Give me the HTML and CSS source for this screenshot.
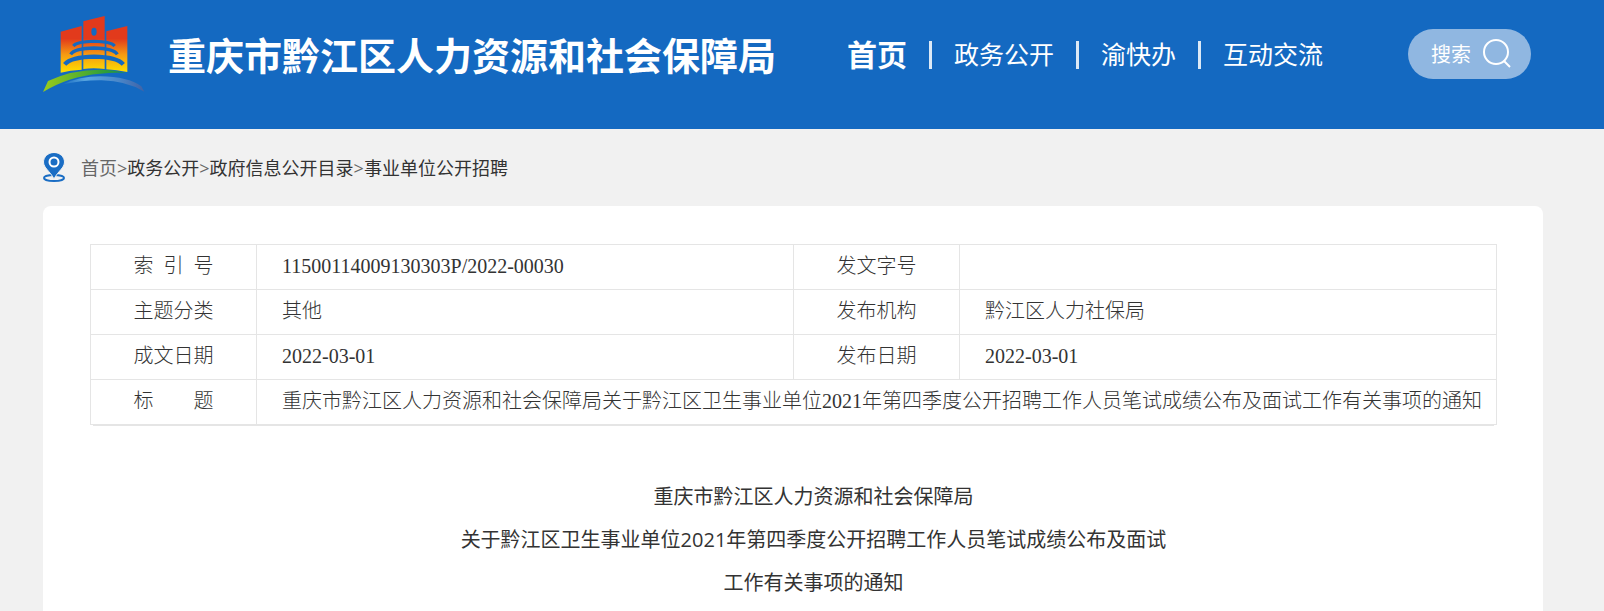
FILE: index.html
```
<!DOCTYPE html>
<html lang="zh-CN">
<head>
    <meta charset="UTF-8">
    <meta name="viewport" content="width=device-width, initial-scale=1.0">
    <title>重庆市黔江区人力资源和社会保障局</title>
    <link rel="stylesheet" href="styles.css">
</head>
<body>
    <header class="header">
        <a class="brand" href="#">
            <svg class="logo" viewBox="39 45 306 234" aria-hidden="true">
                <defs>
                    <linearGradient id="tower" x1="0" y1="48" x2="0" y2="218" gradientUnits="userSpaceOnUse">
                        <stop offset="0.4" stop-color="#e23a1c"/>
                        <stop offset="0.68" stop-color="#f59a12"/>
                        <stop offset="1" stop-color="#ffe000"/>
                    </linearGradient>
                    <linearGradient id="hill">
                        <stop offset="0" stop-color="#9acb1c"/>
                        <stop offset="0.75" stop-color="#2e9e3a"/>
                        <stop offset="1" stop-color="#1d8a5c"/>
                    </linearGradient>
                    <linearGradient id="river">
                        <stop offset="0" stop-color="#1469c1"/>
                        <stop offset="0.3" stop-color="#5aa7e0"/>
                        <stop offset="0.7" stop-color="#4a86c8"/>
                        <stop offset="1" stop-color="#3f62a6"/>
                    </linearGradient>
                </defs>
                <g fill="url(#tower)">
                    <path d="M92 95 L155 78 V209 Q120 211 92 218 Z"/>
                    <path d="M160 64 L224 48 V207 Q190 203 160 207 Z"/>
                    <path d="M229 94 L292 78 V216 Q260 210 229 208 Z"/>
                </g>
                <g fill="none" stroke="#1469c1">
                    <path stroke-width="9" d="M130 138 Q140 125 192 124 Q244 125 254 138"/>
                    <path stroke-width="10" d="M122 163 Q134 145 192 144 Q250 145 262 163"/>
                    <path stroke-width="13" d="M104 193 Q124 171 192 170 Q260 171 280 193"/>
                </g>
                <ellipse cx="192" cy="95" rx="8" ry="12" fill="#1469c1"/>
                <path fill="url(#hill)" d="M39 276 L54 243 Q125 209 210 209 Q252 209 290 219 Q250 217 210 221 Q115 229 39 276 Z"/>
                <path fill="url(#river)" d="M94 254 Q150 229 210 229 Q295 230 334 259 L343 275 Q290 243 215 241 Q160 240 94 254 Z"/>
            </svg>
            <span class="site-name">重庆市黔江区人力资源和社会保障局</span>
        </a>
        <nav class="nav">
            <a class="active" href="#">首页</a>
            <a href="#">政务公开</a>
            <a href="#">渝快办</a>
            <a href="#">互动交流</a>
        </nav>
        <button class="search" type="button">
            <span>搜索</span>
            <svg class="search-icon" viewBox="0 0 30 30" aria-hidden="true">
                <circle cx="13" cy="14" r="12"/>
                <path d="M21 23 L27 29"/>
            </svg>
        </button>
    </header>

    <main class="main">
        <div class="breadcrumb">
            <svg class="pin" viewBox="0 0 22 29" aria-hidden="true">
                <ellipse cx="11" cy="25" rx="10" ry="3" fill="none" stroke="#1a6dc4" stroke-width="2"/>
                <path fill="#1a6dc4" stroke="#f1f1f1" d="M11 -0.5 C5 -0.5 0.5 4 0.5 9 C0.5 15 7 18 11 26 C15 18 21.5 15 21.5 9 C21.5 4 17 -0.5 11 -0.5 Z"/>
                <circle cx="11" cy="9" r="4.5" fill="#1a6dc4" stroke="#fff" stroke-width="2"/>
            </svg>
            <div class="path">
                <a class="home" href="#">首页</a>&gt;<a href="#">政务公开</a>&gt;<a href="#">政府信息公开目录</a>&gt;<a href="#">事业单位公开招聘</a>
            </div>
        </div>

        <article class="card">
            <table class="info">
                <colgroup>
                    <col class="col-label">
                    <col>
                    <col class="col-label">
                    <col>
                </colgroup>
                <tr>
                    <th scope="row">索&ensp;引&ensp;号</th>
                    <td>11500114009130303P/2022-00030</td>
                    <th scope="row">发文字号</th>
                    <td></td>
                </tr>
                <tr>
                    <th scope="row">主题分类</th>
                    <td>其他</td>
                    <th scope="row">发布机构</th>
                    <td>黔江区人力社保局</td>
                </tr>
                <tr>
                    <th scope="row">成文日期</th>
                    <td>2022-03-01</td>
                    <th scope="row">发布日期</th>
                    <td>2022-03-01</td>
                </tr>
                <tr>
                    <th scope="row">标&emsp;&emsp;题</th>
                    <td class="wide" colspan="3">重庆市黔江区人力资源和社会保障局关于黔江区卫生事业单位2021年第四季度公开招聘工作人员笔试成绩公布及面试工作有关事项的通知</td>
                </tr>
            </table>

            <div class="content">
                <p>重庆市黔江区人力资源和社会保障局</p>
                <p>关于黔江区卫生事业单位2021年第四季度公开招聘工作人员笔试成绩公布及面试</p>
                <p>工作有关事项的通知</p>
            </div>
        </article>
    </main>
</body>
</html>
```

FILE: styles.css
```
:root {
    --blue: #1469c1;
    --page: #f1f1f1;
    --line: #e5e5e5;
    --text: #333;
}

* {
    margin: 0;
    padding: 0;
    box-sizing: border-box;
}

body {
    display: flex;
    flex-direction: column;
    min-height: 100vh;
    font-family: "Open Sans", "Noto Sans CJK SC", sans-serif;
    color: var(--text);
    background: var(--page);
}

a {
    color: inherit;
    text-decoration: none;
}

/* Header */
.header {
    display: flex;
    align-items: flex-start;
    height: 129px;
    padding: 15px 73px 0 43px;
    color: #fff;
    background: var(--blue);
    white-space: nowrap;
}

.brand {
    display: flex;
    align-items: center;
    gap: 23px;
}

.logo {
    width: 102px;
    height: 78px;
}

.site-name {
    padding-bottom: 2px;
    font-size: 38px;
    font-weight: bold;
}

.nav {
    display: flex;
    align-items: center;
    height: 78px;
    margin-left: 71px;
    padding-bottom: 2px;
    font-size: 25px;
}

.nav a {
    display: flex;
    align-items: center;
}

.nav a + a::before {
    content: "";
    width: 3px;
    height: 28px;
    margin: 4px 22px 0;
    background: #dce9f6;
}

.nav .active {
    font-size: 30px;
    font-weight: bold;
}

.search {
    display: flex;
    align-items: center;
    gap: 12px;
    height: 50px;
    margin: 14px 0 0 auto;
    padding: 0 18px 2px 23px;
    border: 0;
    border-radius: 25px;
    font: inherit;
    font-size: 20px;
    color: #fff;
    background: #90b7e1;
    cursor: pointer;
}

.search-icon {
    width: 30px;
    height: 30px;
    overflow: visible;
    fill: none;
    stroke: #fff;
    stroke-width: 2;
}

/* Breadcrumb */
.main {
    display: flex;
    flex: 1;
    flex-direction: column;
    padding: 0 61px 0 43px;
}

.breadcrumb {
    display: flex;
    align-items: center;
    gap: 16px;
    height: 77px;
}

.pin {
    width: 22px;
    height: 29px;
}

.path {
    padding-bottom: 2px;
    font-size: 18px;
    color: #666;
}

.path a {
    color: var(--text);
}

.path .home {
    color: #666;
}

/* Article */
.card {
    flex: 1;
    padding: 38px 46px 0 47px;
    border-radius: 8px 8px 0 0;
    background: #fff;
}

.info {
    width: 100%;
    table-layout: fixed;
    border-collapse: collapse;
    font-family: "Liberation Serif", "Noto Sans CJK SC", serif;
    font-size: 20px;
    line-height: 24px;
    box-shadow: 0 4px 0 -3px var(--line);
}

.col-label {
    width: 166px;
}

.info th,
.info td {
    height: 45px;
    padding-bottom: 2px;
    border: 1px solid var(--line);
    font-weight: 300;
}

.info td {
    padding-left: 25px;
}

.info .wide {
    padding-right: 10px;
}

.content {
    padding-top: 50px;
    font-size: 20px;
    line-height: 43px;
    text-align: center;
}

.content p {
    text-indent: 2em;
}
```
